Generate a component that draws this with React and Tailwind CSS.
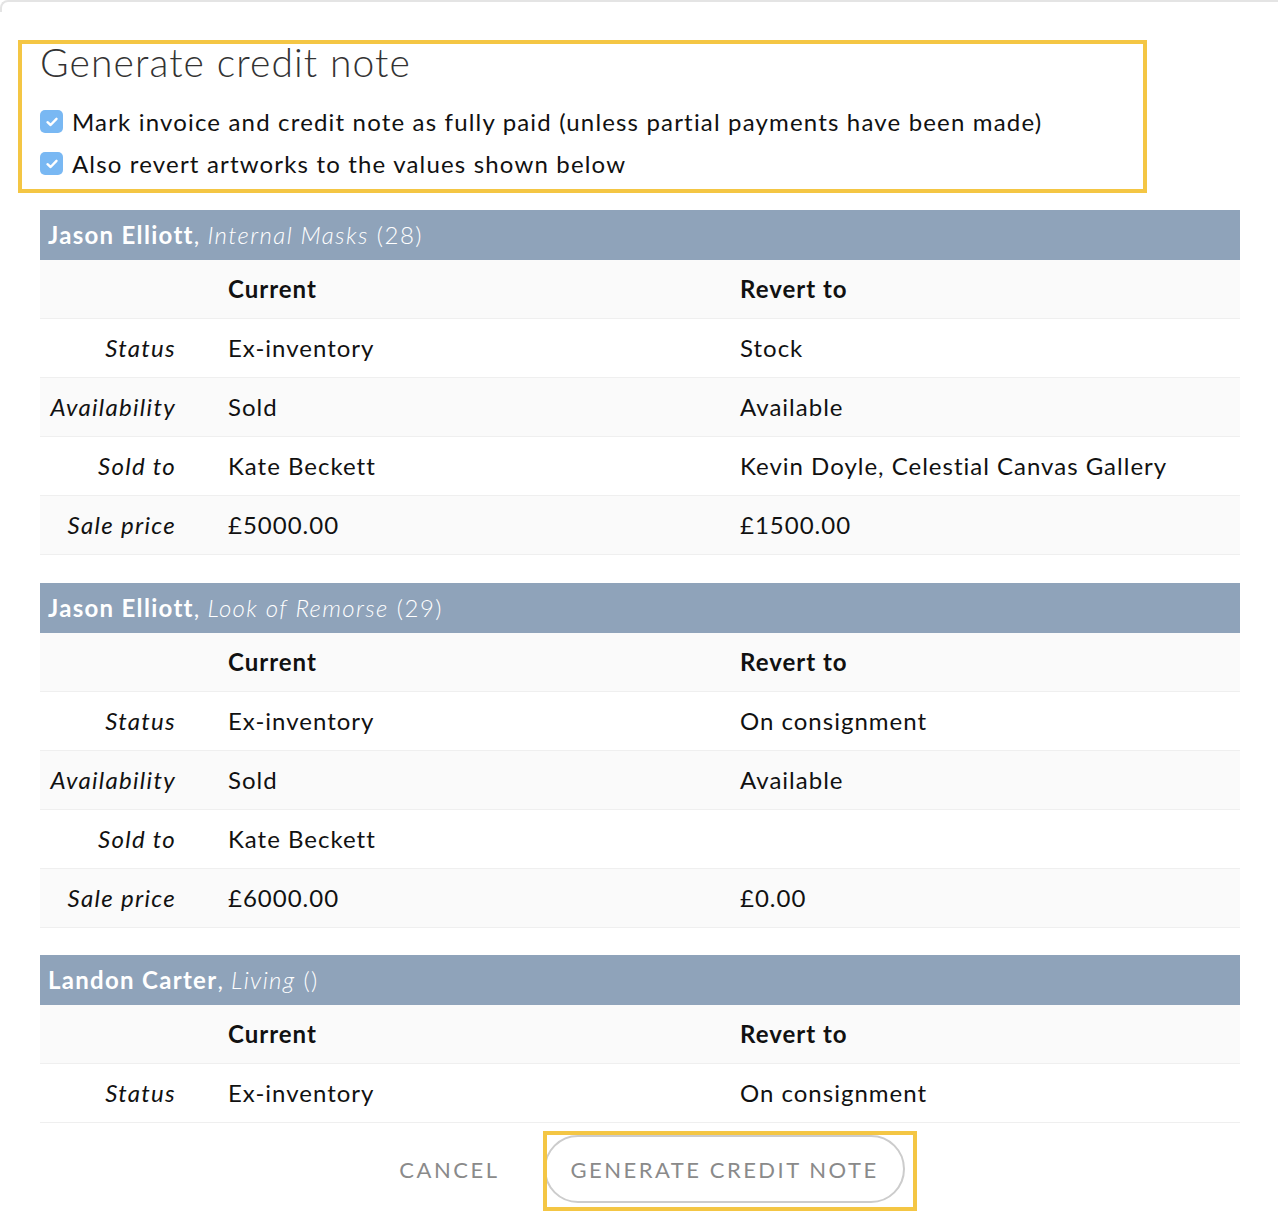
import React from "react";

const font = { fontFamily: "Lato, 'Open Sans', sans-serif" };

function Check() {
  return (
    <span className="w-[23px] h-[23px] rounded-[5px] bg-[#79b8f3] flex items-center justify-center shrink-0">
      <svg width="14" height="14" viewBox="0 0 14 14" fill="none">
        <path d="M2.5 7.2 L5.6 10 L11.5 3.8" stroke="white" strokeWidth="2.4" strokeLinecap="round" strokeLinejoin="round" />
      </svg>
    </span>
  );
}

function Row({ label, cur, rev, alt, header }) {
  return (
    <div className={`flex items-center h-[59px] border-b border-[#efefef] ${alt ? "bg-[#fafafa]" : "bg-white"}`}>
      <div className="w-[136px] text-right italic tracking-[1.3px]">{label}</div>
      <div className={`w-[512px] ml-[52px] ${header ? "font-bold" : ""}`}>{cur}</div>
      <div className={`flex-1 ${header ? "font-bold" : ""}`}>{rev}</div>
    </div>
  );
}

function ArtTable({ artist, title, num, rows, className = "" }) {
  return (
    <div className={`w-[1200px] ${className}`}>
      <div className="h-[50px] bg-[#8fa3ba] text-white flex items-center pl-[8px]">
        <span className="font-bold tracking-[1.3px]">{artist}</span>
        <span>,&nbsp;</span>
        <span className="italic font-light tracking-[1.4px]">{title}</span>
        <span className="font-light tracking-[1.5px]">&nbsp;{num}</span>
      </div>
      <Row label="" cur="Current" rev="Revert to" alt header />
      {rows.map((r, i) => (
        <Row key={i} label={r[0]} cur={r[1]} rev={r[2]} alt={i % 2 === 1} />
      ))}
    </div>
  );
}

export default function App() {
  return (
    <div style={font} className="relative w-[1278px] h-[1214px] bg-white overflow-hidden text-[24px] tracking-[1px] text-[#111]">
      <div className="absolute left-0 top-0 w-[1278px] h-[12px] border-t-2 border-l-2 border-[#e4e4e4] rounded-tl-[8px]" />
      <div className="pl-[40px] pt-[40px]">
        <h1 className="text-[39px] font-light text-[#333] leading-[44px] tracking-[1.1px]">Generate credit note</h1>
        <div className="mt-[26px] flex flex-col gap-[19px] tracking-[1.17px]">
          <label className="flex items-center gap-[9px] h-[23px]">
            <Check />
            <span>Mark invoice and credit note as fully paid (unless partial payments have been made)</span>
          </label>
          <label className="flex items-center gap-[9px] h-[23px]">
            <Check />
            <span>Also revert artworks to the values shown below</span>
          </label>
        </div>
        <ArtTable
          className="mt-[35px]"
          artist="Jason Elliott"
          title="Internal Masks"
          num="(28)"
          rows={[
            ["Status", "Ex-inventory", "Stock"],
            ["Availability", "Sold", "Available"],
            ["Sold to", "Kate Beckett", "Kevin Doyle, Celestial Canvas Gallery"],
            ["Sale price", "£5000.00", "£1500.00"],
          ]}
        />
        <ArtTable
          className="mt-[28px]"
          artist="Jason Elliott"
          title="Look of Remorse"
          num="(29)"
          rows={[
            ["Status", "Ex-inventory", "On consignment"],
            ["Availability", "Sold", "Available"],
            ["Sold to", "Kate Beckett", ""],
            ["Sale price", "£6000.00", "£0.00"],
          ]}
        />
        <ArtTable
          className="mt-[27px]"
          artist="Landon Carter"
          title="Living"
          num="()"
          rows={[["Status", "Ex-inventory", "On consignment"]]}
        />
      </div>
      <div className="flex items-center justify-center pl-[26px] pt-[12px] gap-[45px]">
        <button className="text-[22px] tracking-[2.5px] text-[#8a8a8a] font-normal">CANCEL</button>
        <button className="h-[68px] px-[24px] rounded-full border-2 border-[#cccccc] text-[22px] tracking-[2.5px] text-[#8a8a8a]">
          GENERATE CREDIT NOTE
        </button>
      </div>
      <div className="absolute left-[18px] top-[40px] w-[1129px] h-[153px] border-4 border-[#f4c644] pointer-events-none" />
      <div className="absolute left-[543px] top-[1131px] w-[374px] h-[80px] border-4 border-[#f4c644] pointer-events-none" />
    </div>
  );
}
